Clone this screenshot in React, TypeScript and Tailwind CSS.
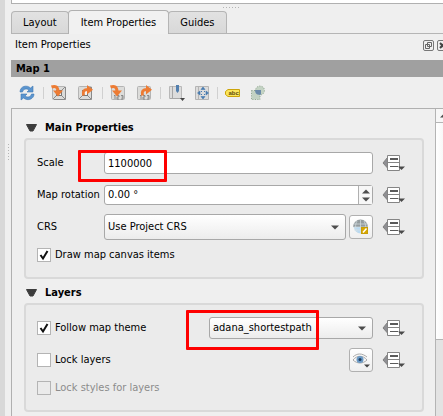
import React from "react";

function DownArrow({ className = "" }: { className?: string }) {
  return (
    <svg className={className} width="8" height="5" viewBox="0 0 8 5" aria-hidden="true">
      <path d="M0 .5h8L4 4.5z" fill="#4d4d4d" />
    </svg>
  );
}

function OverrideButton({ label }: { label: string }) {
  return (
    <button type="button" aria-label={label} className="h-4 w-6 shrink-0">
      <svg width="24" height="16" viewBox="0 0 24 16">
        <path d="M5.500 2.500V13L1 8z" fill="#8f8f93" stroke="#808080" />
        <path d="M5.500.5h12v15h-12z" fill="#fff" stroke="#858585" />
        <path d="M6 7.500h11" stroke="#858585" />
        <path d="M8 4h8" stroke="#5a5a5a" strokeWidth="2" />
        <path d="M8 11.500h8" stroke="#5a5a5a" />
        <path d="M16 11.500h7L19.500 15z" fill="#4a4a4a" />
      </svg>
    </button>
  );
}

function Frame({ digits = false }: { digits?: boolean }) {
  return (
    <g>
      <rect x="1.500" y="1.500" width="13" height="13" rx="1" fill="#dcdcda" stroke="#b4b4b4" />
      {digits ? (
        <path d="M4 11l1-1v4M7 10.500h2v1.500H7v2h2M11 10.500h2v3.500h-2M11.500 12H13" fill="none" stroke="#777" strokeWidth=".8" />
      ) : (
        <g stroke="#777" fill="#f4f4f2">
          <path d="M2 14l3-3M14 2l-3 3M14 14l-3-3" strokeWidth=".8" />
          <rect x="5.500" y="5.500" width="5" height="5" />
          <path d="M14.500 2v12.500H3" fill="none" strokeWidth=".7" />
        </g>
      )}
    </g>
  );
}

function ArrowIn() {
  return (
    <g>
      <path d="M.5 2C4.500.5 7 2 7 7" fill="none" stroke="#ed7b33" strokeWidth="3" />
      <path d="M2 5.500h10L7 11.500z" fill="#ed7b33" />
    </g>
  );
}

function ArrowOut() {
  return (
    <g>
      <path d="M6.500 10.500C5.500 6 7 4.500 11 4.500" fill="none" stroke="#ed7b33" strokeWidth="3" />
      <path d="M10 0l6 4.800-6 4.800z" fill="#ed7b33" />
    </g>
  );
}

function ToolButton({ label, children }: { label: string; children: React.ReactNode }) {
  return (
    <button type="button" aria-label={label} className="h-4 w-4 shrink-0">
      <svg width="16" height="16" viewBox="0 0 16 16" overflow="visible">
        {children}
      </svg>
    </button>
  );
}

function Separator() {
  return <span className="h-3 w-px shrink-0 bg-[#d0d0d0]" />;
}

function Toolbar() {
  return (
    <div className="flex h-[31px] items-center pl-2">
      <div className="flex w-6 shrink-0">
        <ToolButton label="Update map preview">
          <path d="M1 7C1 1 8-.5 11.500 3L14 1v6H8l2-2C7.500 3 4 4 3.500 7z" fill="#5b95cf" stroke="#4078b4" strokeWidth=".6" />
          <path d="M15 9c0 5-6 7.500-10.500 4L2 15V9h6l-2 2c2.500 2 6 1 6.500-2z" fill="#5b95cf" stroke="#4078b4" strokeWidth=".6" />
        </ToolButton>
      </div>
      <Separator />
      <div className="flex gap-[10px] pl-[7px] pr-[9px]">
        <ToolButton label="Set map extent to match main canvas extent"><Frame /><ArrowIn /></ToolButton>
        <ToolButton label="View current map extent in main canvas"><Frame /><ArrowOut /></ToolButton>
      </div>
      <Separator />
      <div className="flex gap-[10px] pl-[7px] pr-[8px]">
        <ToolButton label="Set map scale to match main canvas scale"><Frame digits /><ArrowIn /></ToolButton>
        <ToolButton label="Set main canvas to match current map scale"><Frame digits /><ArrowOut /></ToolButton>
      </div>
      <Separator />
      <div className="flex gap-[9px] pl-2 pr-[7px]">
        <ToolButton label="Bookmarks">
          <path d="M.5 1.500h12v12H.5z" fill="#dcdcdc" stroke="#b8b8b8" />
          <path d="M3.500 1v12M1 13.500h11" stroke="#a6a6a6" fill="none" />
          <path d="M7 0h3v6L8.500 8 7 6z" fill="#527fae" />
          <path d="M11 13h5l-2.500 3z" fill="#444" />
        </ToolButton>
        <ToolButton label="Interactively edit map extent">
          <path d="M1.500 1.500h13v13h-13z" fill="#dcdcdc" stroke="#b4b4b4" />
          <path d="M4.500 1v13" stroke="#b4b4b4" />
          <path d="M9 2l2 2.500H7zM9 14l2-2.500H7zM3.500 8L6 6v4zM14.500 8L12 6v4z" fill="#477bb0" stroke="#477bb0" strokeWidth=".6" />
          <path d="M7 6l1 1M11 6l-1 1M7 10l1-1M11 10l-1-1" stroke="#477bb0" />
        </ToolButton>
      </div>
      <Separator />
      <div className="flex gap-[9px] pl-[7px]">
        <ToolButton label="Labeling settings">
          <path d="M3 4.500h11.500v7H3L.5 9.500v-3z" fill="#fbe65b" stroke="#cca40a" />
          <text x="3.500" y="10" fontSize="6" fontWeight="700" fontFamily="Liberation Sans, sans-serif" fill="#5c4c10">abc</text>
        </ToolButton>
        <ToolButton label="Clipping settings">
          <circle cx="10" cy="5.500" r="4.500" fill="#c3d2c3" stroke="#8ea58e" strokeDasharray="1 1.500" />
          <path d="M1.500 5.500H7l1 3 2 1v5H1.500z" fill="#c3d2c3" stroke="#8ea58e" strokeDasharray="1 1.500" />
          <path d="M5 5h6v4.500C7 10.500 5 8.500 5 5z" fill="#6b8aa9" />
        </ToolButton>
      </div>
    </div>
  );
}

function Tab({ label, active = false }: { label: string; active?: boolean }) {
  return (
    <button
      type="button"
      role="tab"
      aria-selected={active}
      className={
        active
          ? "-mx-px -mb-px h-6 rounded-t-sm border border-b-0 border-[#b0b0b0] bg-[#f1f1f1] px-3"
          : "h-[22px] rounded-t-sm border border-b-0 border-[#b5b5b5] bg-linear-to-b from-[#e2e2e2] to-[#d8d8d8] px-[11px]"
      }
    >
      {label}
    </button>
  );
}

function Group({ title, children }: { title: string; children: React.ReactNode }) {
  return (
    <section>
      <h2 className="flex h-6 items-center gap-2 pl-[2px] pt-1 font-bold">
        <svg width="11" height="8" viewBox="0 0 11 8" aria-hidden="true">
          <path d="M.5.500h10L7 7H4z" fill="#3c3c3c" stroke="#3c3c3c" strokeLinejoin="round" />
        </svg>
        {title}
      </h2>
      <div className="rounded-sm border-2 border-[#d9d9d9] bg-[#ebebeb] pb-[10px] pl-[11px] pr-4 pt-[7px]">{children}</div>
    </section>
  );
}

function Row({ children }: { children: React.ReactNode }) {
  return <div className="relative flex h-8 items-center">{children}</div>;
}

function Select({ id, options, height, label }: { id: string; options: string[]; height: string; label?: string }) {
  return (
    <div className="relative flex min-w-0 flex-1 items-center">
      <select
        id={id}
        aria-label={label}
        className={`block w-full appearance-none rounded-[3px] border border-[#a8a8a8] bg-linear-to-b from-white to-[#ececec] pl-[3px] pr-6 ${height}`}
      >
        {options.map((option) => (
          <option key={option}>{option}</option>
        ))}
      </select>
      <DownArrow className="pointer-events-none absolute right-[7px]" />
    </div>
  );
}

function Check({ label, checked = false, disabled = false }: { label: string; checked?: boolean; disabled?: boolean }) {
  return (
    <label className={`flex items-center gap-1 ${disabled ? "text-[#8c8c8c]" : ""}`}>
      <span className="relative block h-[14px] w-[14px]">
        <input
          type="checkbox"
          defaultChecked={checked}
          disabled={disabled}
          className="peer block h-[14px] w-[14px] appearance-none border border-[#b4b4b4] bg-white disabled:bg-[#ebebeb]"
        />
        <svg className="pointer-events-none invisible absolute inset-0 peer-checked:visible" width="14" height="14" viewBox="0 0 14 14" aria-hidden="true">
          <path d="M3.500 7l2.500 3.500 4.500-7.500" fill="none" stroke="#111" strokeWidth="2" />
        </svg>
      </span>
      {label}
    </label>
  );
}

const squareButton =
  "ml-[3px] grid h-6 w-6 shrink-0 place-items-center rounded-[3px] border border-[#b0b0b0] bg-linear-to-b from-white to-[#efefef]";

export default function App() {
  return (
    <div className="flex overflow-hidden bg-[#efefef] font-['DejaVu_Sans_Condensed',sans-serif] text-[11px] leading-4 text-black">
      <div className="w-[5px] shrink-0 bg-[#d8d8d8]" />
      <div className="flex w-[6px] shrink-0 items-start justify-center pt-36">
        <span className="h-4 w-px bg-[repeating-linear-gradient(180deg,#b4b4b4_0_1px,transparent_1px_3px)]" />
      </div>
      <div className="-mr-2 flex min-w-0 flex-1 flex-col">
        <div className="h-1 border-b border-l border-[#b0b0b0] bg-white" />
        <div className="flex h-[6px] items-center justify-center">
          <span className="h-px w-4 bg-[repeating-linear-gradient(90deg,#b4b4b4_0_1px,transparent_1px_3px)]" />
        </div>
        <div role="tablist" className="flex h-6 items-end border-b border-[#b5b5b5]">
          <Tab label="Layout" />
          <Tab label="Item Properties" active />
          <Tab label="Guides" />
        </div>
        <div className="flex h-[26px] items-center justify-between pb-1 pl-1">
          <h1>Item Properties</h1>
          <div className="flex gap-[3px] pr-[3px]">
            <button type="button" aria-label="Float panel" className="grid h-[11px] w-[11px] place-items-center rounded-[2px] border border-[#777]">
              <svg width="7" height="7" viewBox="0 0 7 7" fill="#efefef" stroke="#666">
                <path d="M2.500.5h4v4h-4zM.5 2.500h4v4h-4z" />
              </svg>
            </button>
            <button type="button" aria-label="Close panel" className="grid h-[11px] w-[11px] place-items-center rounded-[2px] border border-[#777]">
              <svg width="7" height="7" viewBox="0 0 7 7" stroke="#444" strokeWidth="2">
                <path d="M1 1l5 5M6 1L1 6" />
              </svg>
            </button>
          </div>
        </div>
        <div className="flex h-[17px] items-center bg-[#a0a0a0] pl-[5px] font-bold">Map 1</div>
        <Toolbar />
        <div className="flex border-l border-t border-[#b0b0b0]">
          <div className="min-w-0 flex-1 pb-1 pl-3 pr-[11px] pt-[5px]">
            <Group title="Main Properties">
              <Row>
                <label htmlFor="scale" className="w-[67px] shrink-0">Scale</label>
                <input id="scale" defaultValue="1100000" className="h-[22px] min-w-0 flex-1 rounded-[3px] border border-[#a8a8a8] bg-white px-[3px]" />
                <div className="w-[9px] shrink-0" />
                <OverrideButton label="Scale data defined override" />
                <div className="pointer-events-none absolute -bottom-[3px] left-[41px] top-[3px] w-[89px] rounded-[1px] border-3 border-[#fe0000]" />
              </Row>
              <Row>
                <label htmlFor="rotation" className="w-[67px] shrink-0 whitespace-nowrap">Map rotation</label>
                <div className="flex h-5 min-w-0 flex-1 rounded-[3px] border border-[#a8a8a8] bg-white">
                  <input id="rotation" defaultValue="0.00 °" className="min-w-0 flex-1 bg-transparent pl-[3px]" />
                  <div className="flex w-[14px] flex-col items-center justify-center gap-[3px] border-l border-[#b0b0b0] bg-[#f7f7f7]">
                    <button type="button" aria-label="Increase rotation"><DownArrow className="rotate-180" /></button>
                    <button type="button" aria-label="Decrease rotation"><DownArrow /></button>
                  </div>
                </div>
                <div className="w-[9px] shrink-0" />
                <OverrideButton label="Rotation data defined override" />
              </Row>
              <Row>
                <label htmlFor="crs" className="w-[67px] shrink-0">CRS</label>
                <Select id="crs" options={["Use Project CRS"]} height="h-[26px]" />
                <button type="button" aria-label="Select CRS" className={squareButton}>
                  <svg width="16" height="16" viewBox="0 0 16 16">
                    <circle cx="7.500" cy="8" r="6.500" fill="#b9d9f1" />
                    <path d="M0 8a7.500 7.500 0 0 1 15 0z" fill="#949c9f" />
                    <path d="M1 5h13M0 8h15M1 11h8M7.500 1v13M4 2C2 6 2 10 5 14M11 2c2 4 2 6 1 9" fill="none" stroke="#d6dfe2" strokeWidth=".7" />
                    <rect x="8.500" y="8.500" width="6" height="6" fill="#d8a800" stroke="#c79d08" />
                    <path d="M10 13.500l3.500-4" stroke="#fff" strokeWidth="1.500" />
                  </svg>
                </button>
                <div className="w-[9px] shrink-0" />
                <OverrideButton label="CRS data defined override" />
              </Row>
              <div className="flex h-6 items-center"><Check label="Draw map canvas items" checked /></div>
            </Group>
            <Group title="Layers">
              <Row>
                <div className="w-[172px] shrink-0"><Check label="Follow map theme" checked /></div>
                <Select id="theme" label="Map theme" options={["adana_shortestpath"]} height="h-[22px]" />
                <div className="w-[9px] shrink-0" />
                <OverrideButton label="Map theme data defined override" />
                <div className="pointer-events-none absolute -bottom-[6px] -top-[2px] left-[149px] w-[133px] rounded-[1px] border-3 border-[#fe0000]" />
              </Row>
              <Row>
                <div className="flex-1"><Check label="Lock layers" /></div>
                <button type="button" aria-label="Set layer list from a map theme" className={squareButton}>
                  <svg width="18" height="16" viewBox="0 0 18 16">
                    <path d="M1 8C5 3 11 3 15 8 11 12 5 12 1 8z" fill="#f7f7f7" stroke="#aaa" />
                    <path d="M1 5c4-4 9-4 14 0" fill="none" stroke="#aaa" />
                    <circle cx="8" cy="7.500" r="3.500" fill="#6b9ac5" />
                    <circle cx="8" cy="7.500" r="1.500" fill="#203e60" />
                    <path d="M12 12.500h6L15 15.500z" fill="#444" />
                  </svg>
                </button>
                <div className="w-[9px] shrink-0" />
                <OverrideButton label="Layers data defined override" />
              </Row>
              <div className="flex h-6 items-center"><Check label="Lock styles for layers" disabled /></div>
            </Group>
          </div>
          <div className="flex w-4 shrink-0 flex-col border-l border-[#b4b4b4] bg-[#e3e3e3]">
            <button type="button" aria-label="Scroll up" className="flex h-[14px] items-center justify-center border-b border-[#b4b4b4] bg-[#f7f7f7]">
              <DownArrow className="rotate-180" />
            </button>
            <div className="h-[217px] border-b border-[#b4b4b4] bg-linear-to-r from-white to-[#f0f0f0]" />
          </div>
        </div>
      </div>
    </div>
  );
}
